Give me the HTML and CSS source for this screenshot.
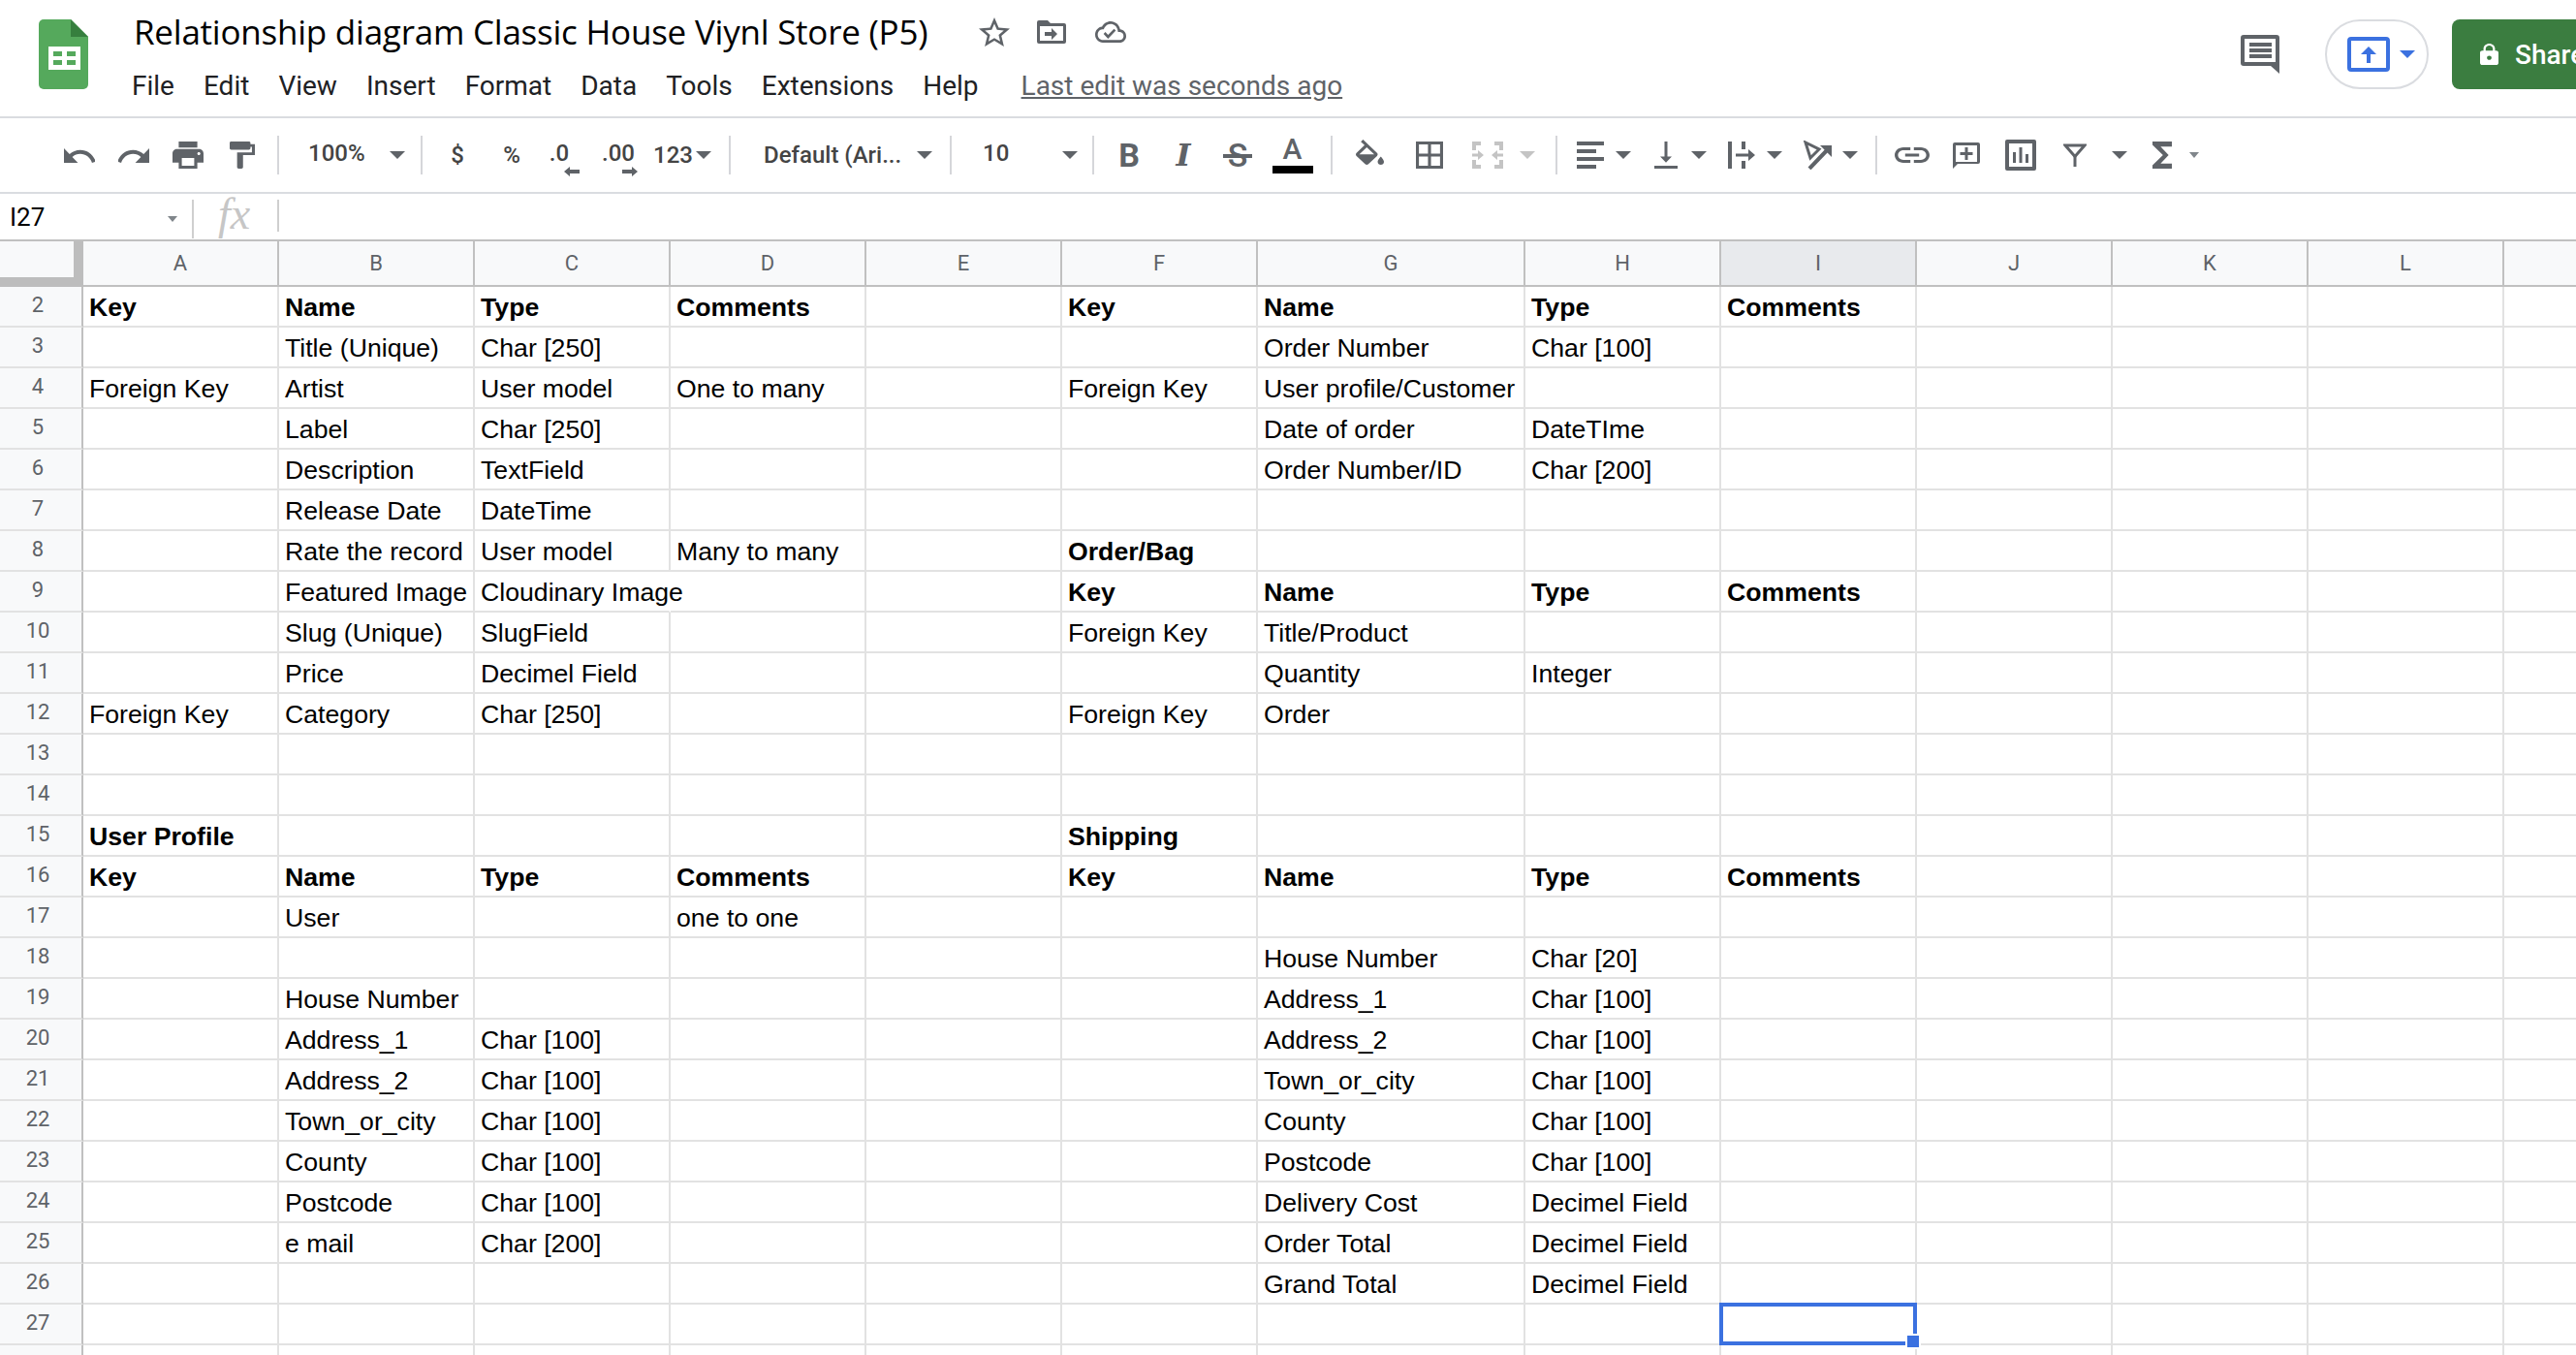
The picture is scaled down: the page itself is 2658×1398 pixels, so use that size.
FILE: index.html
```html
<!DOCTYPE html>
<html lang="en">
<head>
<meta charset="utf-8">
<title>Relationship diagram Classic House Viynl Store (P5) - Google Sheets</title>
<link rel="stylesheet" href="styles.css">
</head>
<body>
<div class="app">
  <header class="topbar">
    <svg class="logo" width="51" height="72" viewBox="0 0 51 72"><path fill="#55a95c" d="M5 0h28l18 18v49a5 5 0 0 1-5 5H5a5 5 0 0 1-5-5V5a5 5 0 0 1 5-5z"/><path fill="#367f3e" d="M33 0l18 18H33z"/><path fill="#fff" fill-rule="evenodd" d="M10 28h33v24H10zM15 33v5h9v-5zm14 0v5h9v-5zM15 42v5h9v-5zm14 0v5h9v-5z"/></svg>
    <div class="docinfo">
      <div class="titlerow">
        <span class="title">Relationship diagram Classic House Viynl Store (P5)</span>
        <svg class="ico star" width="32" height="30" viewBox="2 2 20 19" preserveAspectRatio="none"><path d="M22 9.24l-7.19-.62L12 2 9.19 8.63 2 9.24l5.46 4.73L5.82 21 12 17.27 18.18 21l-1.63-7.03L22 9.24zM12 15.4l-3.76 2.27 1-4.28-3.32-2.88 4.38-.38L12 6.1l1.71 4.04 4.38.38-3.32 2.88 1 4.28L12 15.4z"/></svg>
        <svg class="ico folder" width="30" height="24" viewBox="0 0 30 24"><path fill-rule="evenodd" d="M2 0h9l3 3h14a2 2 0 0 1 2 2v17a2 2 0 0 1-2 2H2a2 2 0 0 1-2-2V2a2 2 0 0 1 2-2zm1 6v15h24V6z"/><path d="M8 12h7V8l6 6-6 6v-4H8z"/></svg>
        <svg class="ico cloud" width="32" height="22" viewBox="0 4 24 16" preserveAspectRatio="none"><path d="M19.35 10.04C18.67 6.59 15.64 4 12 4 9.11 4 6.6 5.64 5.35 8.04 2.34 8.36 0 10.91 0 14c0 3.31 2.69 6 6 6h13c2.76 0 5-2.24 5-5 0-2.64-2.05-4.78-4.65-4.96zM19 18H6c-2.21 0-4-1.79-4-4 0-2.05 1.53-3.76 3.56-3.97l1.07-.11.5-.95C8.08 7.14 9.94 6 12 6c2.62 0 4.88 1.86 5.39 4.43l.3 1.5 1.53.11c1.56.1 2.78 1.41 2.78 2.96 0 1.65-1.35 3-3 3zm-9-3.82l-2.09-2.09L6.5 13.5 10 17l6.01-6.01-1.41-1.41z"/></svg>
      </div>
      <nav class="menu">
        <span>File</span><span>Edit</span><span>View</span><span>Insert</span><span>Format</span><span>Data</span><span>Tools</span><span>Extensions</span><span>Help</span>
        <a class="lastedit">Last edit was seconds ago</a>
      </nav>
    </div>
    <div class="actions">
      <svg class="ico" width="40" height="40" viewBox="0 0 40 40"><path fill-rule="evenodd" d="M3 0h34a3 3 0 0 1 3 3v37l-9-8H3a3 3 0 0 1-3-3V3a3 3 0 0 1 3-3zM4 4v24h32V4z"/><path d="M9 8h23v4H9zM9 14h23v4H9zM9 20h23v4H9z"/></svg>
      <div class="present">
        <svg width="44" height="36" viewBox="0 0 44 36"><rect x="2" y="2" width="40" height="32" rx="2" fill="none" stroke="#3b71e0" stroke-width="4"/><path fill="#3b71e0" d="M22 10l8 8h-6v9h-4v-9h-6z"/></svg>
        <i class="tri tri-blue"></i>
      </div>
      <div class="share">
        <svg width="19" height="22" viewBox="4 1 16 21" preserveAspectRatio="none"><path fill="#fff" d="M18 8h-1V6c0-2.76-2.24-5-5-5S7 3.24 7 6v2H6c-1.1 0-2 .9-2 2v10c0 1.1.9 2 2 2h12c1.1 0 2-.9 2-2V10c0-1.1-.9-2-2-2zm-6 9c-1.1 0-2-.9-2-2s.9-2 2-2 2 .9 2 2-.9 2-2 2zm3.1-9H8.9V6c0-1.71 1.39-3.1 3.1-3.1 1.71 0 3.1 1.39 3.1 3.1v2z"/></svg>
        <span>Share</span>
      </div>
    </div>
  </header>

  <div class="toolbar">
    <div class="btn"><svg class="ico" width="32" height="15" viewBox="2 7 20 9" preserveAspectRatio="none"><path d="M12.5 8c-2.65 0-5.05.99-6.9 2.6L2 7v9h9l-3.62-3.62c1.39-1.16 3.16-1.88 5.12-1.88 3.54 0 6.55 2.31 7.6 5.5l2.37-.78C21.08 11.03 17.15 8 12.5 8z"/></svg></div>
    <div class="btn"><svg class="ico" width="32" height="15" viewBox="2 7 20 9" preserveAspectRatio="none"><path d="M18.4 10.6C16.55 8.99 14.15 8 11.5 8c-4.65 0-8.58 3.03-9.96 7.22L3.9 16c1.05-3.19 4.05-5.5 7.6-5.5 1.95 0 3.73.72 5.12 1.88L13 16h9V7l-3.6 3.6z"/></svg></div>
    <div class="btn"><svg class="ico" width="32" height="28" viewBox="2 3 20 18" preserveAspectRatio="none"><path d="M19 8H5c-1.66 0-3 1.34-3 3v6h4v4h12v-4h4v-6c0-1.66-1.34-3-3-3zm-3 11H8v-5h8v5zm3-7c-.55 0-1-.45-1-1s.45-1 1-1 1 .45 1 1-.45 1-1 1zm-1-9H6v4h12V3z"/></svg></div>
    <div class="btn"><svg class="ico" width="26" height="28" viewBox="4 2 17 20" preserveAspectRatio="none"><path d="M18 4V3c0-.55-.45-1-1-1H5c-.55 0-1 .45-1 1v4c0 .55.45 1 1 1h12c.55 0 1-.45 1-1V6h1v4H9v11c0 .55.45 1 1 1h2c.55 0 1-.45 1-1v-9h8V4h-3z"/></svg></div>
    <div class="sep"></div>
    <div class="select zoomsel"><span>100%</span><i class="tri"></i></div>
    <div class="sep"></div>
    <div class="btn txt">$</div>
    <div class="btn txt">%</div>
    <div class="btn txt stack"><span class="dec1">.0</span><svg class="ico arr1" width="16" height="10" viewBox="0 0 16 10"><path d="M0 5l6-5v3h10v4H6v3z"/></svg></div>
    <div class="btn txt stack"><span class="dec2">.00</span><svg class="ico arr2" width="16" height="10" viewBox="0 0 16 10"><path d="M16 5l-6-5v3H0v4h10v3z"/></svg></div>
    <div class="btn txt more"><span>123</span><i class="tri"></i></div>
    <div class="sep"></div>
    <div class="select fontsel"><span>Default (Ari...</span><i class="tri"></i></div>
    <div class="sep"></div>
    <div class="select sizesel"><span>10</span><i class="tri"></i></div>
    <div class="sep"></div>
    <div class="btn glyph bold">B</div>
    <div class="btn glyph ital">I</div>
    <div class="btn glyph strike"><span class="strikeglyph">S</span></div>
    <div class="btn colorbtn"><span class="glyph-a">A</span><i class="colorbar"></i></div>
    <div class="sep sep-wide"></div>
    <div class="btn btn60 fillbtn"><svg class="ico fill" width="29" height="26" viewBox="3 0 18 17" preserveAspectRatio="none"><path d="M16.56 8.94L7.62 0 6.21 1.41l2.38 2.38-5.15 5.15c-.59.59-.59 1.54 0 2.12l5.5 5.5c.29.29.68.44 1.06.44s.77-.15 1.06-.44l5.5-5.5c.59-.58.59-1.53 0-2.12zM5.21 10L10 5.21 14.79 10H5.21zM19 11.5s-2 2.17-2 3.5c0 1.1.9 2 2 2s2-.9 2-2c0-1.33-2-3.5-2-3.5z"/></svg></div>
    <div class="btn btn60"><svg class="ico" width="28" height="28" viewBox="3 3 18 18"><path d="M3 3v18h18V3H3zm8 16H5v-6h6v6zm0-8H5V5h6v6zm8 8h-6v-6h6v6zm0-8h-6V5h6v6z"/></svg></div>
    <div class="btn btn60"><svg class="ico off" width="32" height="28" viewBox="0 0 32 28"><path d="M0 0h9v4H4v5H0zM23 0h9v9h-4V4h-5zM0 19h4v5h5v4H0zM28 19h4v9h-9v-4h5zM0 12.500h6V9l6 5-6 5v-3.500H0zM32 12.500h-6V9l-6 5 6 5v-3.500h6z"/></svg></div>
    <div class="tri-slot"><i class="tri tri-off"></i></div>
    <div class="sep sep-wide"></div>
    <div class="dd"><span class="slot"><svg class="ico" width="28" height="28" viewBox="0 0 28 28"><path d="M0 0h28v4H0zM0 8h20v4H0zM0 16h28v4H0zM0 24h20v4H0z"/></svg></span><i class="tri"></i></div>
    <div class="dd"><span class="slot"><svg class="ico" width="24" height="28" viewBox="4 3 16 18" preserveAspectRatio="none"><path d="M16 13h-3V3h-2v10H8l4 4 4-4zM4 19v2h16v-2H4z"/></svg></span><i class="tri"></i></div>
    <div class="dd"><span class="slot"><svg class="ico" width="28" height="28" viewBox="0 0 28 28"><path d="M0 0h4v28H0zM14 0h4v8h-4zM14 20h4v8h-4zM8 12.500h13V8l7 6-7 6v-4.500H8z"/></svg></span><i class="tri"></i></div>
    <div class="dd"><span class="slot"><svg class="ico" width="32" height="30" viewBox="0 0 32 30"><path d="M4 2l14 7-9 9z" fill="none" stroke="#5f6368" stroke-width="3"/><path d="M8 29L29 7" fill="none" stroke="#5f6368" stroke-width="4"/><path d="M19 5h12v12z"/></svg></span><i class="tri"></i></div>
    <div class="sep"></div>
    <div class="btn"><svg class="ico" width="36" height="16" viewBox="2 7 20 10" preserveAspectRatio="none"><path d="M3.900 12c0-1.710 1.390-3.100 3.100-3.100h4V7H7c-2.760 0-5 2.240-5 5s2.240 5 5 5h4v-1.900H7c-1.710 0-3.100-1.390-3.100-3.100zM8 13h8v-2H8v2zm9-6h-4v1.900h4c1.710 0 3.100 1.390 3.100 3.100s-1.390 3.100-3.100 3.100h-4V17h4c2.760 0 5-2.240 5-5s-2.240-5-5-5z"/></svg></div>
    <div class="btn"><svg class="ico" width="28" height="27" viewBox="0 0 28 27"><path fill-rule="evenodd" d="M2 0h24a2 2 0 0 1 2 2v18a2 2 0 0 1-2 2H5l-5 5V2a2 2 0 0 1 2-2zm1 3v17h22V3z"/><path d="M12.500 5h3v5h5v3h-5v5h-3v-5h-5v-3h5z"/></svg></div>
    <div class="btn"><svg class="ico" width="32" height="32" viewBox="0 0 32 32"><path fill-rule="evenodd" d="M2 0h28a2 2 0 0 1 2 2v28a2 2 0 0 1-2 2H2a2 2 0 0 1-2-2V2a2 2 0 0 1 2-2zm2 4v24h24V4z"/><path d="M8 13h3v11H8zM14.500 8h3v16h-3zM21 15h3v9h-3z"/></svg></div>
    <div class="btn filterbtn"><svg class="ico" width="24" height="24" viewBox="0 0 24 24"><path d="M2 2h20L12 13.500z" fill="none" stroke="#5f6368" stroke-width="3"/><path d="M10.500 12h3v12h-3z"/></svg></div>
    <i class="tri filtertri"></i>
    <div class="btn sigmabtn"><svg class="ico" width="20" height="28" viewBox="6 4 12 16" preserveAspectRatio="none"><path d="M18 4H6v2l6.500 6L6 18v2h12v-3h-7l5-5-5-5h7z"/></svg></div>
    <i class="tri tri-small"></i>
  </div>

  <div class="formulabar">
    <div class="namebox"><span>I27</span><i class="tri tri-small"></i></div>
    <div class="fx">fx</div>
  </div>

  <div class="sheet">
    <table class="grid">
      <colgroup><col class="c-head"><col class="c"><col class="c"><col class="c"><col class="c"><col class="c"><col class="c"><col class="c-g"><col class="c"><col class="c"><col class="c"><col class="c"><col class="c"><col class="c"></colgroup>
      <thead>
        <tr><th class="corner"></th><th>A</th><th>B</th><th>C</th><th>D</th><th>E</th><th>F</th><th>G</th><th>H</th><th class="cur">I</th><th>J</th><th>K</th><th>L</th><th></th></tr>
      </thead>
      <tbody>
        <tr class="b"><th>2</th><td>Key</td><td>Name</td><td>Type</td><td>Comments</td><td></td><td>Key</td><td>Name</td><td>Type</td><td>Comments</td><td></td><td></td><td></td><td></td></tr>
        <tr><th>3</th><td></td><td>Title (Unique)</td><td>Char [250]</td><td></td><td></td><td></td><td>Order Number</td><td>Char [100]</td><td></td><td></td><td></td><td></td><td></td></tr>
        <tr><th>4</th><td>Foreign Key</td><td>Artist</td><td>User model</td><td>One to many</td><td></td><td>Foreign Key</td><td>User profile/Customer</td><td></td><td></td><td></td><td></td><td></td><td></td></tr>
        <tr><th>5</th><td></td><td>Label</td><td>Char [250]</td><td></td><td></td><td></td><td>Date of order</td><td>DateTIme</td><td></td><td></td><td></td><td></td><td></td></tr>
        <tr><th>6</th><td></td><td>Description</td><td>TextField</td><td></td><td></td><td></td><td>Order Number/ID</td><td>Char [200]</td><td></td><td></td><td></td><td></td><td></td></tr>
        <tr><th>7</th><td></td><td>Release Date</td><td>DateTime</td><td></td><td></td><td></td><td></td><td></td><td></td><td></td><td></td><td></td><td></td></tr>
        <tr><th>8</th><td></td><td>Rate the record</td><td>User model</td><td>Many to many</td><td></td><td class="strong">Order/Bag</td><td></td><td></td><td></td><td></td><td></td><td></td><td></td></tr>
        <tr><th>9</th><td></td><td>Featured Image</td><td class="spill">Cloudinary Image</td><td></td><td></td><td class="strong">Key</td><td class="strong">Name</td><td class="strong">Type</td><td class="strong">Comments</td><td></td><td></td><td></td><td></td></tr>
        <tr><th>10</th><td></td><td>Slug (Unique)</td><td>SlugField</td><td></td><td></td><td>Foreign Key</td><td>Title/Product</td><td></td><td></td><td></td><td></td><td></td><td></td></tr>
        <tr><th>11</th><td></td><td>Price</td><td>Decimel Field</td><td></td><td></td><td></td><td>Quantity</td><td>Integer</td><td></td><td></td><td></td><td></td><td></td></tr>
        <tr><th>12</th><td>Foreign Key</td><td>Category</td><td>Char [250]</td><td></td><td></td><td>Foreign Key</td><td>Order</td><td></td><td></td><td></td><td></td><td></td><td></td></tr>
        <tr><th>13</th><td></td><td></td><td></td><td></td><td></td><td></td><td></td><td></td><td></td><td></td><td></td><td></td><td></td></tr>
        <tr><th>14</th><td></td><td></td><td></td><td></td><td></td><td></td><td></td><td></td><td></td><td></td><td></td><td></td><td></td></tr>
        <tr class="b"><th>15</th><td>User Profile</td><td></td><td></td><td></td><td></td><td>Shipping</td><td></td><td></td><td></td><td></td><td></td><td></td><td></td></tr>
        <tr class="b"><th>16</th><td>Key</td><td>Name</td><td>Type</td><td>Comments</td><td></td><td>Key</td><td>Name</td><td>Type</td><td>Comments</td><td></td><td></td><td></td><td></td></tr>
        <tr><th>17</th><td></td><td>User</td><td></td><td>one to one</td><td></td><td></td><td></td><td></td><td></td><td></td><td></td><td></td><td></td></tr>
        <tr><th>18</th><td></td><td></td><td></td><td></td><td></td><td></td><td>House Number</td><td>Char [20]</td><td></td><td></td><td></td><td></td><td></td></tr>
        <tr><th>19</th><td></td><td>House Number</td><td></td><td></td><td></td><td></td><td>Address_1</td><td>Char [100]</td><td></td><td></td><td></td><td></td><td></td></tr>
        <tr><th>20</th><td></td><td>Address_1</td><td>Char [100]</td><td></td><td></td><td></td><td>Address_2</td><td>Char [100]</td><td></td><td></td><td></td><td></td><td></td></tr>
        <tr><th>21</th><td></td><td>Address_2</td><td>Char [100]</td><td></td><td></td><td></td><td>Town_or_city</td><td>Char [100]</td><td></td><td></td><td></td><td></td><td></td></tr>
        <tr><th>22</th><td></td><td>Town_or_city</td><td>Char [100]</td><td></td><td></td><td></td><td>County</td><td>Char [100]</td><td></td><td></td><td></td><td></td><td></td></tr>
        <tr><th>23</th><td></td><td>County</td><td>Char [100]</td><td></td><td></td><td></td><td>Postcode</td><td>Char [100]</td><td></td><td></td><td></td><td></td><td></td></tr>
        <tr><th>24</th><td></td><td>Postcode</td><td>Char [100]</td><td></td><td></td><td></td><td>Delivery Cost</td><td>Decimel Field</td><td></td><td></td><td></td><td></td><td></td></tr>
        <tr><th>25</th><td></td><td>e mail</td><td>Char [200]</td><td></td><td></td><td></td><td>Order Total</td><td>Decimel Field</td><td></td><td></td><td></td><td></td><td></td></tr>
        <tr><th>26</th><td></td><td></td><td></td><td></td><td></td><td></td><td>Grand Total</td><td>Decimel Field</td><td></td><td></td><td></td><td></td><td></td></tr>
        <tr><th>27</th><td></td><td></td><td></td><td></td><td></td><td></td><td></td><td></td><td class="active"><div class="selection"><i class="handle"></i></div></td><td></td><td></td><td></td><td></td></tr>
        <tr><th></th><td></td><td></td><td></td><td></td><td></td><td></td><td></td><td></td><td></td><td></td><td></td><td></td><td></td></tr>
      </tbody>
    </table>
  </div>
</div>
</body>
</html>
```

FILE: styles.css
```css
* { box-sizing: border-box; }
html, body { margin: 0; height: 100%; background: #fff; overflow: hidden; }
.app { width: 2658px; height: 1398px; overflow: hidden; font-family: Roboto, "Liberation Sans", sans-serif; color: #202124; }
.ico { fill: #5f6368; display: block; flex: none; }
.ico.off { fill: #c4c4c4; }

.tri { display: block; flex: none; width: 0; height: 0; border-left: 8px solid transparent; border-right: 8px solid transparent; border-top: 8px solid #5f6368; }
.tri-small { border-left-width: 5px; border-right-width: 5px; border-top-width: 6px; border-top-color: #80868b; }
.tri-off { border-top-color: #c4c4c4; }
.tri-blue { border-top-color: #3b71e0; }

.topbar { height: 122px; border-bottom: 2px solid #dadce0; display: flex; align-items: flex-start; padding-left: 40px; }
.logo { margin-top: 20px; flex: none; }
.docinfo { margin-left: 47px; padding-top: 13px; flex: none; }
.titlerow { display: flex; align-items: center; height: 40px; }
.title { font-family: "Open Sans", sans-serif; font-size: 35px; line-height: 40px; color: #000; letter-spacing: -0.23px; width: 872px; white-space: nowrap; flex: none; }
.star { margin-right: 28px; }
.folder { margin-right: 30px; }
.menu { display: flex; height: 36px; margin-top: 18px; align-items: center; font-size: 28px; line-height: 36px; color: #202124; margin-left: -2px; gap: 30px; white-space: nowrap; }
.lastedit { color: #5f6368; text-decoration: underline; margin-left: 14px; }
.actions { margin-left: auto; margin-right: -72px; display: flex; align-items: flex-start; flex: none; }
.actions > .ico { margin-top: 36px; }
.present { margin-top: 20px; margin-left: 47px; width: 107px; height: 72px; border: 2px solid #dadce0; border-radius: 36px; display: flex; align-items: center; padding-left: 21px; gap: 10px; }
.share { margin-top: 20px; margin-left: 24px; width: 200px; height: 72px; background: #3b7d40; border-radius: 8px; display: flex; align-items: center; padding-left: 29px; gap: 17px; color: #fff; font-size: 28px; font-weight: 500; }

.toolbar { height: 78px; border-bottom: 2px solid #dadce0; display: flex; align-items: center; padding-left: 54px; }
.btn { width: 56px; height: 40px; flex: none; display: flex; align-items: center; justify-content: center; color: #444; }
.btn60 { width: 60px; }
.fillbtn { width: 62px; padding-right: 2px; }
.sep { width: 2px; height: 40px; background: #d5d6da; margin: 0 8px; flex: none; }
.sep-wide { margin-left: 12px; margin-right: 8px; }
.select { display: flex; align-items: center; flex: none; height: 40px; font-size: 24px; font-weight: 500; color: #444; white-space: nowrap; }
.zoomsel { width: 130px; padding-left: 22px; justify-content: space-between; padding-right: 8px; }
.fontsel { width: 210px; padding-left: 26px; justify-content: space-between; padding-right: 10px; }
.sizesel { width: 129px; padding-left: 24px; justify-content: space-between; padding-right: 7px; }
.zoomsel span, .sizesel span { margin-bottom: 4px; }
.txt { font-size: 24px; font-weight: 500; }
.stack { flex-direction: column; height: 48px; line-height: 24px; margin-top: 8px; }
.dec1 { margin-right: 14px; }
.dec2 { margin-right: 4px; }
.arr1 { margin-left: 12px; margin-top: 2px; }
.arr2 { margin-left: 20px; margin-top: 2px; }
.more { width: 76px; gap: 3px; justify-content: flex-start; padding-left: 6px; }
.glyph { font-size: 34px; color: #5f6368; }
.bold { font-weight: 700; }
.ital { font-family: "DejaVu Serif", serif; font-style: italic; font-weight: 700; font-size: 32px; }
.strike { font-weight: 500; }
.strikeglyph { position: relative; line-height: 34px; }
.strikeglyph::after { content: ""; position: absolute; left: -5px; right: -5px; top: 16px; height: 4px; background: #5f6368; }
.colorbtn { flex-direction: column; height: 44px; justify-content: flex-start; margin-top: 2px; padding-left: 1px; }
.glyph-a { font-size: 30px; line-height: 30px; color: #5f6368; font-weight: 500; }
.colorbar { display: block; width: 42px; height: 8px; background: #000; margin-top: 2px; }
.fill { margin-top: -6px; }
.tri-slot { width: 28px; display: flex; padding-left: 3px; flex: none; }
.dd { width: 78px; height: 40px; display: flex; align-items: center; flex: none; }
.slot { width: 52px; display: flex; justify-content: center; flex: none; }
.filtertri { margin-left: 10px; }
.sigmabtn { margin-left: 8px; }

.formulabar { height: 47px; display: flex; align-items: stretch; }
.namebox { width: 200px; flex: none; display: flex; align-items: center; justify-content: space-between; padding: 0 15px 5px 10px; font-size: 26px; color: #000; border-right: 2px solid #cfcfcf; margin: 6px 0 1px; }
.namebox .tri { margin-top: 5px; }
.fx { width: 88px; flex: none; margin: 6px 0 8px; border-right: 2px solid #cfcfcf; font-family: "Liberation Serif", serif; font-style: italic; font-size: 46px; line-height: 30px; color: #c6c6c6; padding-left: 25px; }

.sheet { border-top: 2px solid #c0c0c0; }
.grid { table-layout: fixed; border-collapse: separate; border-spacing: 0; width: 2786px; }
.c-head { width: 86px; }
.c { width: 202px; }
.c-g { width: 276px; }
.grid th { font-weight: 400; font-size: 22px; color: #5f6368; background: #f8f9fa; padding: 0; }
.grid thead th { height: 47px; border-right: 2px solid #c0c0c0; border-bottom: 2px solid #c0c0c0; }
.grid thead th.corner { border-right-width: 10px; border-bottom-width: 10px; border-color: #bdbdbd; }
.grid thead th.cur { background: #e8eaed; }
.grid tbody th { height: 42px; border-right: 2px solid #c0c0c0; border-bottom: 2px solid #e2e2e2; padding-right: 6px; padding-bottom: 4px; }
.grid td { height: 42px; border-right: 2px solid #e2e2e2; border-bottom: 2px solid #e2e2e2; padding: 0 4px 4px 6px; vertical-align: bottom; font-family: "Liberation Sans", Arial, sans-serif; font-size: 26.67px; line-height: 30px; color: #000; white-space: nowrap; }
.grid .b td, .grid td.strong { font-weight: 700; }
.grid td.spill { border-right-color: transparent; }
.grid td.active { position: relative; padding: 0; }
.selection { position: absolute; left: -2px; top: -2px; width: 204px; height: 44px; border: 4px solid #3b71e0; }
.handle { position: absolute; right: -8px; bottom: -8px; width: 16px; height: 16px; background: #3b71e0; border: 2px solid #fff; }
```
